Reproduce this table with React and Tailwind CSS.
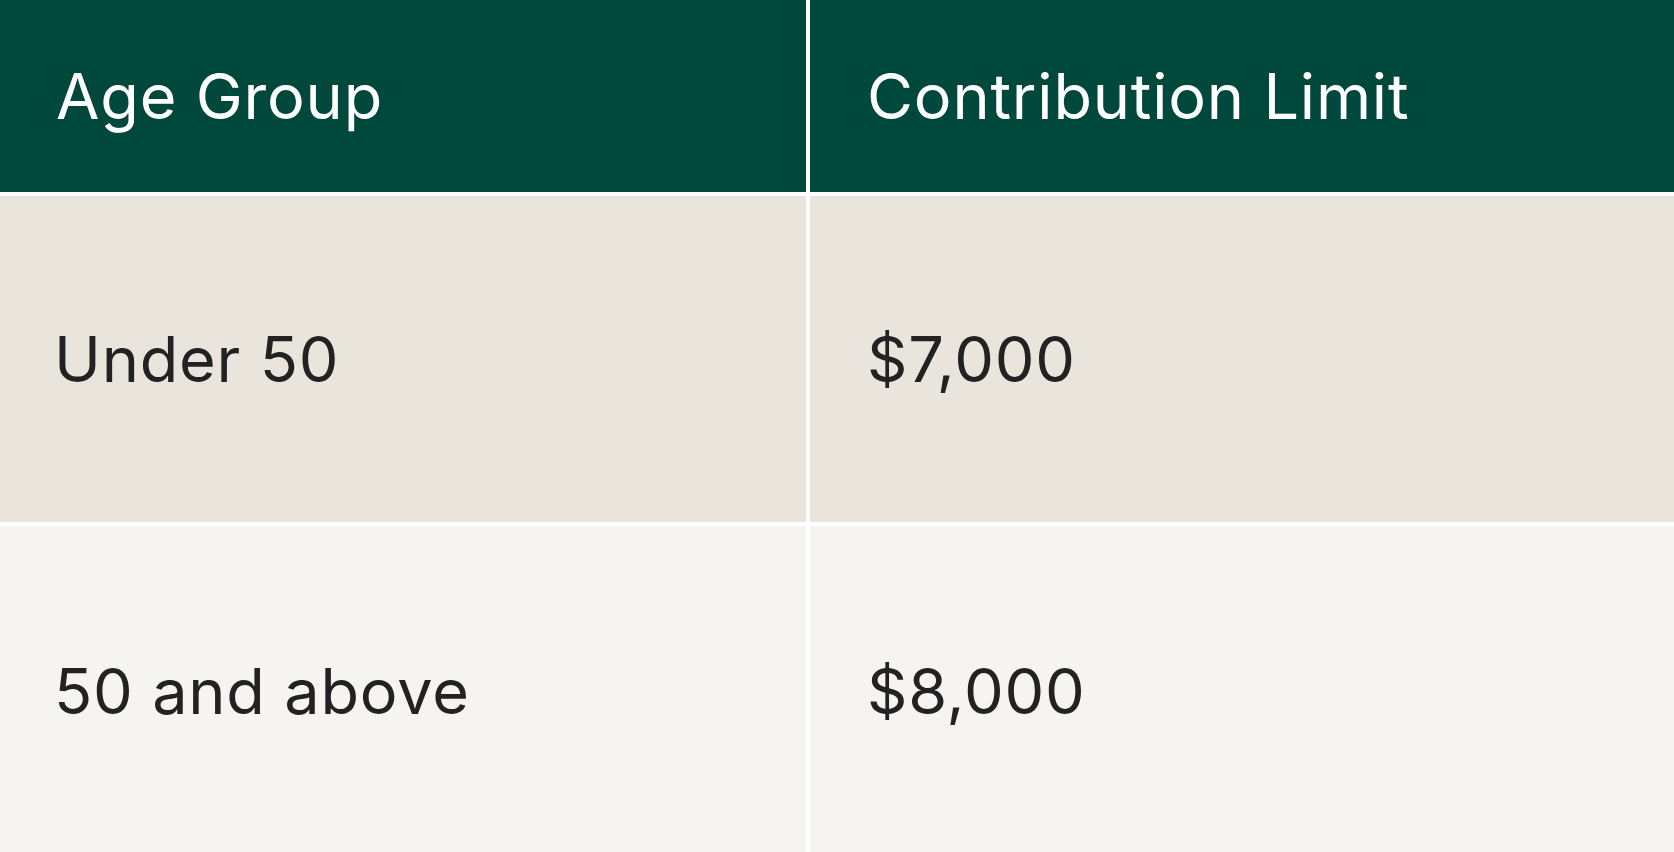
import React from "react";

const rows = [
  { age: "Under 50", limit: "$7,000", bg: "bg-[#e9e5dc]" },
  { age: "50 and above", limit: "$8,000", bg: "bg-[#f5f4f0]" },
];

export default function App() {
  return (
    <div
      className="w-full h-[852px] overflow-hidden bg-white"
      style={{ fontFamily: "Inter, 'Liberation Sans', Arial, sans-serif" }}
    >
      <div className="grid grid-cols-[806px_1fr] grid-rows-[192px_326px_330px] gap-1 bg-white tracking-[0.8px]">
        {/* Header */}
        <div className="bg-[#01483c] flex items-center pl-[56px] text-white text-[63px]">
          Age Group
        </div>
        <div className="bg-[#01483c] flex items-center pl-[57px] text-white text-[63px]">
          Contribution Limit
        </div>

        {/* Rows */}
        {rows.map((r) => (
          <React.Fragment key={r.age}>
            <div className={`${r.bg} flex items-center pl-[54px] text-[#222222] text-[63px]`}>
              {r.age}
            </div>
            <div className={`${r.bg} flex items-center pl-[57px] text-[#222222] text-[63px]`}>
              {r.limit}
            </div>
          </React.Fragment>
        ))}
      </div>
    </div>
  );
}
